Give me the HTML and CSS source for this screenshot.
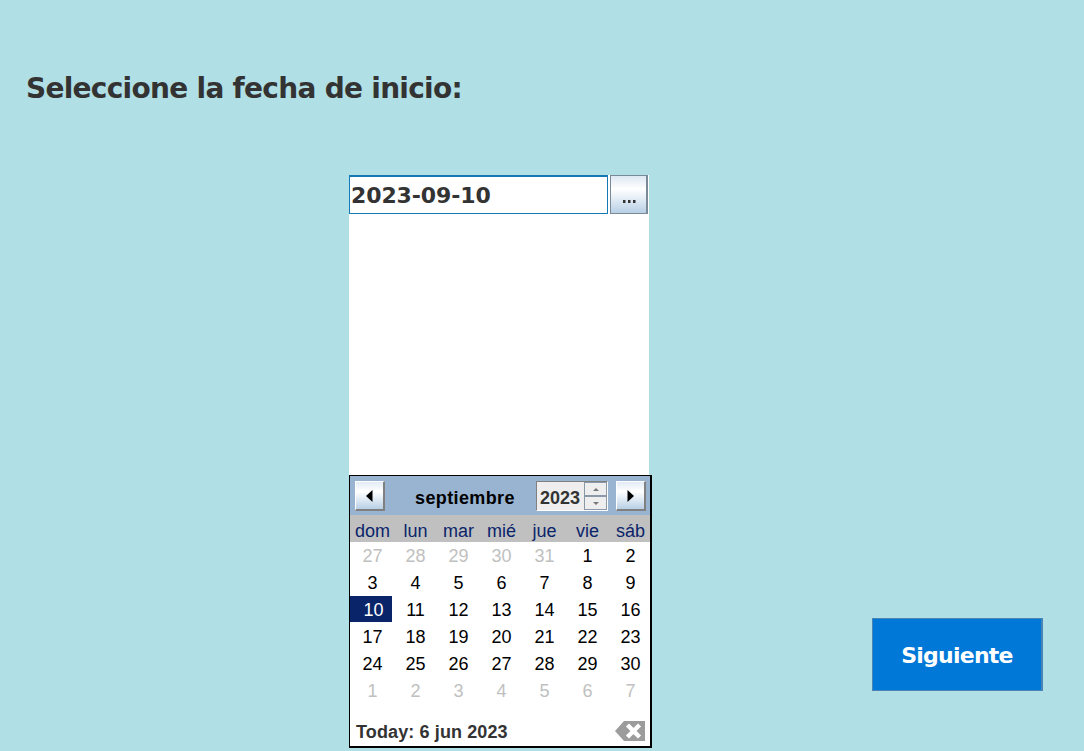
FILE: index.html
```html
<!DOCTYPE html>
<html lang="es">
<head>
<meta charset="utf-8">
<title>Fecha de inicio</title>
<link rel="stylesheet" href="styles.css">
</head>
<body>
<main class="window">
  <h1 class="title">Seleccione la fecha de inicio:</h1>
  <div class="content">
    <section class="picker">
      <div class="field">
        <div class="date">2023-09-10</div>
        <button class="browse"><svg width="14" height="3" viewBox="0 0 14 3"><path d="M1 0h2.5v3H1zM6 0h2.5v3H6zM11 0h2.5v3H11z" fill="#333"/></svg></button>
      </div>
      <div class="blank"></div>
      <div class="calendar">
        <div class="nav">
          <button class="arrow"><svg width="7" height="12" viewBox="0 0 7 12"><path d="M6.5 0v12L0 6z"/></svg></button>
          <span class="month">septiembre</span>
          <div class="year"><span class="year-value">2023</span>
            <div class="spin">
              <span class="step"><svg width="6" height="3" viewBox="0 0 6 3"><path d="M3 0l3 3H0z"/></svg></span>
              <span class="step"><svg width="6" height="3" viewBox="0 0 6 3"><path d="M0 0h6L3 3z"/></svg></span>
            </div>
          </div>
          <button class="arrow"><svg width="7" height="12" viewBox="0 0 7 12"><path d="M.5 0v12L7 6z"/></svg></button>
        </div>
        <div class="week names"><span>dom</span><span>lun</span><span>mar</span><span>mié</span><span>jue</span><span>vie</span><span>sáb</span></div>
        <div class="week"><span class="out">27</span><span class="out">28</span><span class="out">29</span><span class="out">30</span><span class="out">31</span><span>1</span><span>2</span></div>
        <div class="week"><span>3</span><span>4</span><span>5</span><span>6</span><span>7</span><span>8</span><span>9</span></div>
        <div class="week"><span class="selected">10</span><span>11</span><span>12</span><span>13</span><span>14</span><span>15</span><span>16</span></div>
        <div class="week"><span>17</span><span>18</span><span>19</span><span>20</span><span>21</span><span>22</span><span>23</span></div>
        <div class="week"><span>24</span><span>25</span><span>26</span><span>27</span><span>28</span><span>29</span><span>30</span></div>
        <div class="week"><span class="out">1</span><span class="out">2</span><span class="out">3</span><span class="out">4</span><span class="out">5</span><span class="out">6</span><span class="out">7</span></div>
        <div class="footer">
          <span class="today">Today: 6 jun 2023</span>
          <svg class="clear" width="30" height="20" viewBox="0 0 30 20"><path d="M0 10L9 0h21v20H9z" fill="#9c9c9c"/><path d="M14 5.5l9 9M23 5.5l-9 9" stroke="#fff" stroke-width="4.4" stroke-linecap="square"/></svg>
        </div>
      </div>
    </section>
    <button class="next">Siguiente</button>
  </div>
</main>
</body>
</html>
```
FILE: styles.css
```css
* { box-sizing: border-box; }
body { margin: 0; background: #b0dfe5; overflow: hidden; }
button { padding: 0; margin: 0; border-radius: 0; }
svg { display: block; }
.window { width: 1084px; height: 751px; padding-top: 68px; }
.title {
  margin: 0 0 0 26px;
  height: 107px;
  font: bold 28px/41px "DejaVu Sans", sans-serif;
  letter-spacing: -0.72px;
  color: #333;
  white-space: nowrap;
}
.content { display: flex; align-items: flex-start; padding-left: 349px; }
.picker { width: 303px; }
.field { display: flex; gap: 2px; width: 300px; height: 39px; background: #fff; }
.date {
  width: 259px;
  height: 39px;
  padding-left: 1px;
  border: 1px solid #1478b4;
  border-top-width: 2px;
  background: #fff;
  font: bold 22px/37px "DejaVu Sans", sans-serif;
  letter-spacing: -0.1px;
  color: #333;
}
.browse {
  display: flex;
  justify-content: center;
  width: 38px;
  height: 39px;
  padding-top: 24px;
  border: 1px solid #7a8a99;
  border-right-width: 2px;
  background: linear-gradient(#dde8f3, #fff 35%, #f0f5fa 50%, #b8cfe5);
}
.blank { width: 300px; height: 261px; background: #fff; }
.calendar {
  width: 303px;
  height: 273px;
  border: solid #000;
  border-width: 1px 2px 2px 1px;
  background: #fff;
  font: 18px/29px "Liberation Sans", Arial, sans-serif;
}
.nav { display: flex; align-items: flex-start; height: 39px; padding: 5px 4px 0 5px; background: #99b4d1; }
.arrow {
  display: flex;
  flex: none;
  align-items: center;
  justify-content: center;
  width: 30px;
  height: 30px;
  border: 1px solid #fff;
  border-right: 2px solid #808080;
  border-bottom: 2px solid #808080;
  background: linear-gradient(#e2ebf5, #fff 35%, #f0f5fa 50%, #b8cfe5);
}
.month { width: 151px; padding: 3px 0 0 30px; font-weight: bold; letter-spacing: 0.38px; }
.year {
  display: flex;
  width: 72px;
  height: 30px;
  margin-right: 8px;
  border: 1px solid #808080;
  border-right-color: #fff;
  border-bottom-color: #fff;
  background: #eee;
}
.year-value { width: 47px; padding: 2px 0 0 3px; font-weight: bold; color: #333; }
.spin { width: 23px; }
.step { display: flex; height: 14px; align-items: center; justify-content: center; border: 1px solid #8a98a8; background: #eee; fill: #777; }
.week { display: grid; grid-template-columns: repeat(7, 43px); height: 27px; text-align: center; color: #000; }
.week span { padding-left: 2px; height: 26px; }
.names { background: #c0c0c0; color: #0a246a; line-height: 33px; }
.out { color: #c0c0c0; }
.week .selected { width: 42px; padding-left: 5px; background: #0a246a; color: #fff; }
.footer { display: flex; justify-content: space-between; align-items: flex-start; padding: 17px 5px 0 6px; height: 42px; }
.today { line-height: 22px; font-weight: bold; letter-spacing: 0.12px; color: #333; }
.next {
  width: 171px;
  height: 73px;
  margin: 443px 0 0 220px;
  border: 1px solid #4a84b4;
  border-right-width: 2px;
  background: #0078d7;
  color: #fff;
  font: bold 22px/73px "DejaVu Sans", sans-serif;
  letter-spacing: -0.75px;
}
```
